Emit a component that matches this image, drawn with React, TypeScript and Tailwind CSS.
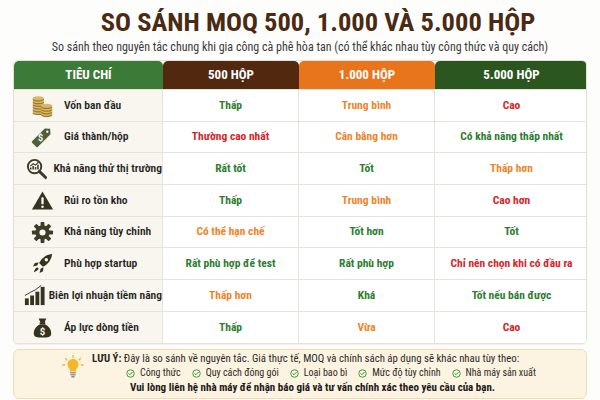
import React from 'react';

const G = 'text-[#2e7d32]';
const R = 'text-[#d7262b]';
const O = 'text-[#f0842a]';

const NARROW = "font-['Roboto_Condensed',Roboto,sans-serif]";

function Coins() {
  const stack = (x: number, y: number, n: number) =>
    Array.from({ length: n }).map((_, i) => (
      <g key={i}>
        <ellipse cx={x} cy={y - i * 2.6 + 1.2} rx="5.5" ry="2" fill="#9c7a33" />
        <ellipse cx={x} cy={y - i * 2.6} rx="5.5" ry="2" fill="#d8b865" />
      </g>
    ));
  return (
    <svg width="25" height="25" viewBox="0 0 24 24">
      {stack(8, 18, 6)}
      {stack(16, 20, 4)}
    </svg>
  );
}

function Tag() {
  return (
    <svg width="24" height="24" viewBox="0 0 24 24">
      <g transform="rotate(45 12 12)">
        <path d="M8 4 L12 0.5 L16 4 L16 22 Q16 23 15 23 L9 23 Q8 23 8 22 Z" fill="#4f5f3b" />
        <circle cx="12" cy="4.5" r="1.2" fill="#fff" />
        <text x="12" y="17" textAnchor="middle" fontSize="9" fontWeight="700" fill="#fff" fontFamily="Roboto, sans-serif" transform="rotate(-45 12 14)">$</text>
      </g>
    </svg>
  );
}

function Search() {
  return (
    <svg width="23" height="23" viewBox="0 0 24 24" fill="none" stroke="#3b3a2a" strokeWidth="2">
      <circle cx="10" cy="10" r="7" />
      <path d="M15 15 L21.5 21.5" strokeWidth="3" strokeLinecap="round" />
      <path d="M6 13 V11 M8.5 13 V9.5 M11 13 V10.5 M13.5 13 V8" strokeWidth="1.6" />
      <path d="M5.5 9.5 L8.5 7 L11 8.5 L14 5.5" strokeWidth="1.2" />
    </svg>
  );
}

function Warn() {
  return (
    <svg width="23" height="23" viewBox="0 0 24 24">
      <path d="M12 2.5 L23 21.5 L1 21.5 Z" fill="#35331f" strokeLinejoin="round" />
      <rect x="10.8" y="8.5" width="2.4" height="7.5" rx="1" fill="#fff" />
      <circle cx="12" cy="18.6" r="1.3" fill="#fff" />
    </svg>
  );
}

function Gear() {
  const teeth = Array.from({ length: 8 }).map((_, i) => (
    <rect key={i} x="10" y="1" width="4" height="5" rx="0.8" fill="#3f3d2a" transform={`rotate(${i * 45} 12 12)`} />
  ));
  return (
    <svg width="23" height="23" viewBox="0 0 24 24">
      {teeth}
      <circle cx="12" cy="12" r="7.5" fill="#3f3d2a" />
      <circle cx="12" cy="12" r="3.2" fill="#faf8f2" />
    </svg>
  );
}

function Rocket() {
  return (
    <svg width="23" height="23" viewBox="0 0 24 24" fill="#35331f">
      <path d="M22 2 C16 2.5 11.5 6 8.5 11.5 L12.5 15.5 C18 12.5 21.5 8 22 2 Z" />
      <circle cx="16" cy="8" r="1.8" fill="#faf8f2" />
      <path d="M8 11 L4 11.5 L2 15 L6.5 14 Z" />
      <path d="M13 16 L12.5 20 L9 22 L10 17.5 Z" />
      <path d="M6.5 16 C5 16.5 3.5 19 3 21 C5 20.5 7.5 19 8 17.5 Z" />
    </svg>
  );
}

function Bars() {
  return (
    <svg width="23" height="23" viewBox="0 0 24 24" fill="#35331f">
      <rect x="2" y="15" width="4" height="7" />
      <rect x="7.5" y="12" width="4" height="10" />
      <rect x="13" y="8" width="4" height="14" />
      <rect x="18.5" y="3" width="4" height="19" />
      <path d="M2 12 L8 8.5 L13 6 L19 1.5" stroke="#35331f" strokeWidth="1" fill="none" />
    </svg>
  );
}

function Bag() {
  return (
    <svg width="23" height="23" viewBox="0 0 24 24">
      <path d="M8 2.5 L16 2.5 L14 7 L10 7 Z" fill="#35331f" />
      <rect x="9" y="6.5" width="6" height="1.8" rx="0.6" fill="#35331f" />
      <path d="M9.5 8.5 C4 11 2.5 16 3 19 C3.5 22 6 22.5 12 22.5 C18 22.5 20.5 22 21 19 C21.5 16 20 11 14.5 8.5 Z" fill="#35331f" />
      <text x="12" y="20" textAnchor="middle" fontSize="10" fontWeight="700" fill="#fff" fontFamily="Roboto, sans-serif">$</text>
    </svg>
  );
}

function Bulb() {
  return (
    <svg width="22" height="24" viewBox="0 0 22 24">
      <g stroke="#f5b82a" strokeWidth="1.3" strokeLinecap="round">
        <path d="M11 0.5 V2.5" />
        <path d="M3.5 3.5 L5 5" />
        <path d="M18.5 3.5 L17 5" />
        <path d="M0.8 10 H2.8" />
        <path d="M19.2 10 H21.2" />
      </g>
      <path d="M11 4 C7.5 4 5.5 6.7 5.5 9.5 C5.5 12 7.3 13.3 8 15 L8 16.5 L14 16.5 L14 15 C14.7 13.3 16.5 12 16.5 9.5 C16.5 6.7 14.5 4 11 4 Z" fill="#f7b52c" />
      <rect x="8" y="17" width="6" height="1.6" rx="0.5" fill="#9a9a9a" />
      <rect x="8.3" y="19" width="5.4" height="1.6" rx="0.5" fill="#9a9a9a" />
      <rect x="9.3" y="21" width="3.4" height="1.4" rx="0.6" fill="#8a8a8a" />
    </svg>
  );
}

function CheckCircle() {
  return (
    <svg width="9" height="9" viewBox="0 0 12 12" fill="none" stroke="#3c9a3c" strokeWidth="1.3">
      <circle cx="6" cy="6" r="5" />
      <path d="M3.6 6.1 L5.3 7.7 L8.4 4.5" strokeLinecap="round" strokeLinejoin="round" />
    </svg>
  );
}

type Cell = [string, string];
const rows: { icon: React.ReactNode; label: string; cells: Cell[] }[] = [
  { icon: <Coins />, label: 'Vốn ban đầu', cells: [['Thấp', G], ['Trung bình', O], ['Cao', R]] },
  { icon: <Tag />, label: 'Giá thành/hộp', cells: [['Thường cao nhất', R], ['Cân bằng hơn', O], ['Có khả năng thấp nhất', G]] },
  { icon: <Search />, label: 'Khả năng thử thị trường', cells: [['Rất tốt', G], ['Tốt', G], ['Thấp hơn', O]] },
  { icon: <Warn />, label: 'Rủi ro tồn kho', cells: [['Thấp', G], ['Trung bình', O], ['Cao hơn', R]] },
  { icon: <Gear />, label: 'Khả năng tùy chỉnh', cells: [['Có thể hạn chế', O], ['Tốt hơn', G], ['Tốt', G]] },
  { icon: <Rocket />, label: 'Phù hợp startup', cells: [['Rất phù hợp để test', G], ['Rất phù hợp', G], ['Chỉ nên chọn khi có đầu ra', R]] },
  { icon: <Bars />, label: 'Biên lợi nhuận tiềm năng', cells: [['Thấp hơn', O], ['Khá', G], ['Tốt nếu bán được', G]] },
  { icon: <Bag />, label: 'Áp lực dòng tiền', cells: [['Thấp', G], ['Vừa', O], ['Cao', R]] },
];

const checks = ['Công thức', 'Quy cách đóng gói', 'Loại bao bì', 'Mức độ tùy chỉnh', 'Nhà máy sản xuất'];

export default function App() {
  return (
    <div className={`w-[600px] h-[400px] bg-[#fdfdfb] overflow-hidden ${NARROW}`}>
      <div className="pt-[7px] text-center">
        <h1 className="pl-[36px] text-[26.5px] leading-[30px] font-bold text-[#4a2a12]">
          SO SÁNH MOQ 500, 1.000 VÀ 5.000 HỘP
        </h1>
        <p className="mt-[3px] text-[12px] leading-[14px] text-[#3a3a3a]">
          So sánh theo nguyên tắc chung khi gia công cà phê hòa tan (có thể khác nhau tùy công thức và quy cách)
        </p>
      </div>

      <div className="mx-[13px] mt-[6px] w-[574px] rounded-[5px] border border-[#e4e1d7] shadow-[0_1px_2px_rgba(0,0,0,0.06)] overflow-hidden">
        <div className="grid grid-cols-[149px_136px_136px_153px] h-[28px] text-white text-[13px] font-bold">
          <div className="flex items-center justify-center rounded-t-[5px] bg-[#3b7a37]">TIÊU CHÍ</div>
          <div className="flex items-center justify-center rounded-t-[5px] bg-[#52280f]">500 HỘP</div>
          <div className="flex items-center justify-center rounded-t-[5px] bg-[#e8741c]">1.000 HỘP</div>
          <div className="flex items-center justify-center rounded-t-[5px] bg-[#2c561f]">5.000 HỘP</div>
        </div>
        {rows.map((r, i) => (
          <div key={i} className="grid grid-cols-[149px_136px_136px_153px] h-[31.7px] border-t border-[#e6e3da]">
            <div className="flex items-center bg-[#f8f6ef] border-r border-[#e6e3da]">
              <div className="w-[50px] pl-[6px] flex justify-center">{r.icon}</div>
              <span className="text-[11.5px] font-semibold text-[#1f1f1f] whitespace-nowrap">{r.label}</span>
            </div>
            {r.cells.map(([t, c], j) => (
              <div
                key={j}
                className={`flex items-center justify-center bg-white text-[11.5px] font-bold whitespace-nowrap ${c} ${j < 2 ? 'border-r border-[#e6e3da]' : ''}`}
              >
                {t}
              </div>
            ))}
          </div>
        ))}
      </div>

      <div className="mx-[13px] mt-[5px] h-[50px] rounded-[6px] border border-[#f2dcae] bg-[#fdf3e1] flex items-center">
        <div className="w-[76px] flex justify-end pr-[6px] -mt-[14px]">
          <Bulb />
        </div>
        <div className="flex flex-col text-[#2a2a2a]">
          <p className="pl-[2px] text-[10.8px] leading-[15px]">
            <span className="font-bold">LƯU Ý:</span> Đây là so sánh về nguyên tắc. Giá thực tế, MOQ và chính sách áp dụng sẽ khác nhau tùy theo:
          </p>
          <div className="flex items-center gap-[11px] pl-[36px] text-[10px] leading-[14px]">
            {checks.map(c => (
              <span key={c} className="flex items-center gap-[5px]">
                <CheckCircle />
                {c}
              </span>
            ))}
          </div>
          <p className="pl-[40px] text-[11px] leading-[16px] font-bold text-[#1a1a1a]">
            Vui lòng liên hệ nhà máy để nhận báo giá và tư vấn chính xác theo yêu cầu của bạn.
          </p>
        </div>
      </div>
    </div>
  );
}
